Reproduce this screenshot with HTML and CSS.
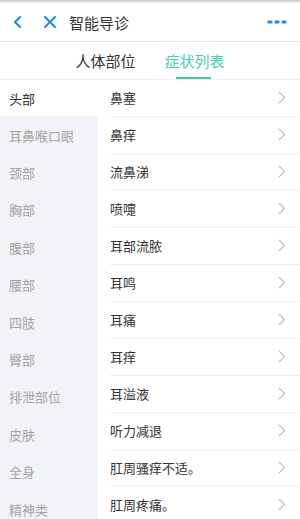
FILE: index.html
```html
<!DOCTYPE html>
<html lang="zh">
<head>
<meta charset="utf-8">
<link rel="stylesheet" href="styles.css">
</head>
<body>
<div class="app">
  <div class="strip"></div>
  <header class="header">
    <span class="icon back">
      <svg width="10" height="12" viewBox="0 0 10 12"><polyline points="7,1 2,6 7,11" fill="none" stroke="#1e88e5" stroke-width="2" stroke-linecap="round" stroke-linejoin="round"/></svg>
    </span>
    <span class="icon close">
      <svg width="14" height="14" viewBox="0 0 14 14"><path d="M2 2 L12 12 M12 2 L2 12" fill="none" stroke="#1e88e5" stroke-width="2" stroke-linecap="round"/></svg>
    </span>
    <span class="title">智能导诊</span>
    <span class="more">
      <svg width="20" height="4" viewBox="0 0 20 4"><rect x="0.5" y="0.5" width="5" height="3" rx="1" fill="#1e88e5"/><rect x="7.5" y="0.5" width="5" height="3" rx="1" fill="#1e88e5"/><rect x="14.5" y="0.5" width="5" height="3" rx="1" fill="#1e88e5"/></svg>
    </span>
  </header>
  <nav class="tabs">
    <span class="tab">人体部位</span>
    <span class="tab active">症状列表</span>
  </nav>
  <div class="main">
    <ul class="side">
      <li class="side-item selected">头部</li>
      <li class="side-item">耳鼻喉口眼</li>
      <li class="side-item">颈部</li>
      <li class="side-item">胸部</li>
      <li class="side-item">腹部</li>
      <li class="side-item">腰部</li>
      <li class="side-item">四肢</li>
      <li class="side-item">臀部</li>
      <li class="side-item">排泄部位</li>
      <li class="side-item">皮肤</li>
      <li class="side-item">全身</li>
      <li class="side-item">精神类</li>
    </ul>
    <ul class="list">
      <li class="row"><span>鼻塞</span><svg class="chev" width="8" height="13" viewBox="0 0 8 13"><polyline points="1,1 6.5,6.5 1,12" fill="none" stroke="#bdbdbd" stroke-width="1.2"/></svg></li>
      <li class="row"><span>鼻痒</span><svg class="chev" width="8" height="13" viewBox="0 0 8 13"><polyline points="1,1 6.5,6.5 1,12" fill="none" stroke="#bdbdbd" stroke-width="1.2"/></svg></li>
      <li class="row"><span>流鼻涕</span><svg class="chev" width="8" height="13" viewBox="0 0 8 13"><polyline points="1,1 6.5,6.5 1,12" fill="none" stroke="#bdbdbd" stroke-width="1.2"/></svg></li>
      <li class="row"><span>喷嚏</span><svg class="chev" width="8" height="13" viewBox="0 0 8 13"><polyline points="1,1 6.5,6.5 1,12" fill="none" stroke="#bdbdbd" stroke-width="1.2"/></svg></li>
      <li class="row"><span>耳部流脓</span><svg class="chev" width="8" height="13" viewBox="0 0 8 13"><polyline points="1,1 6.5,6.5 1,12" fill="none" stroke="#bdbdbd" stroke-width="1.2"/></svg></li>
      <li class="row"><span>耳鸣</span><svg class="chev" width="8" height="13" viewBox="0 0 8 13"><polyline points="1,1 6.5,6.5 1,12" fill="none" stroke="#bdbdbd" stroke-width="1.2"/></svg></li>
      <li class="row"><span>耳痛</span><svg class="chev" width="8" height="13" viewBox="0 0 8 13"><polyline points="1,1 6.5,6.5 1,12" fill="none" stroke="#bdbdbd" stroke-width="1.2"/></svg></li>
      <li class="row"><span>耳痒</span><svg class="chev" width="8" height="13" viewBox="0 0 8 13"><polyline points="1,1 6.5,6.5 1,12" fill="none" stroke="#bdbdbd" stroke-width="1.2"/></svg></li>
      <li class="row"><span>耳溢液</span><svg class="chev" width="8" height="13" viewBox="0 0 8 13"><polyline points="1,1 6.5,6.5 1,12" fill="none" stroke="#bdbdbd" stroke-width="1.2"/></svg></li>
      <li class="row"><span>听力减退</span><svg class="chev" width="8" height="13" viewBox="0 0 8 13"><polyline points="1,1 6.5,6.5 1,12" fill="none" stroke="#bdbdbd" stroke-width="1.2"/></svg></li>
      <li class="row"><span>肛周骚痒不适。</span><svg class="chev" width="8" height="13" viewBox="0 0 8 13"><polyline points="1,1 6.5,6.5 1,12" fill="none" stroke="#bdbdbd" stroke-width="1.2"/></svg></li>
      <li class="row"><span>肛周疼痛。</span><svg class="chev" width="8" height="13" viewBox="0 0 8 13"><polyline points="1,1 6.5,6.5 1,12" fill="none" stroke="#bdbdbd" stroke-width="1.2"/></svg></li>
    </ul>
  </div>
</div>
</body>
</html>
```

FILE: styles.css
```css
* { box-sizing: border-box; }
html, body {
  margin: 0;
  padding: 0;
  background: #fff;
}
body {
  width: 300px;
  height: 519px;
  overflow: hidden;
  font-family: "Noto Sans CJK SC", "Noto Sans", sans-serif;
  color: #333;
}
ul { list-style: none; margin: 0; padding: 0; }

.strip {
  height: 3px;
  background: linear-gradient(#c4c4c4, #f2f2f2);
}
.header {
  height: 39px;
  display: flex;
  align-items: center;
  border-bottom: 1px solid #e6e6e6;
}
.icon { display: flex; align-items: center; }
.back { margin-left: 13px; }
.close { margin-left: 20px; }
.title {
  margin-left: 12px;
  font-size: 15px;
  color: #333;
  flex: 1;
  line-height: 1;
}
.more { margin-right: 13px; display: flex; }

.tabs {
  height: 38px;
  display: flex;
  justify-content: center;
  gap: 29px;
  border-bottom: 1px solid #eeeeee;
}
.tab {
  font-size: 15px;
  line-height: 37px;
  color: #333;
  position: relative;
}
.tab.active { color: #45cfb2; }
.tab.active::after {
  content: "";
  position: absolute;
  left: 11px;
  right: 14px;
  bottom: 0;
  height: 2px;
  background: #3ccaa9;
}

.main {
  display: flex;
}
.side {
  width: 98px;
  background: #f2f3f7;
}
.side-item {
  height: 37.4px;
  display: flex;
  align-items: center;
  padding-left: 9px;
  padding-top: 1px;
  font-size: 13px;
  color: #a3a3a3;
}
.side-item.selected {
  background: #fff;
  color: #333;
  height: 36px;
}
.list {
  flex: 1;
  margin-left: 12px;
}
.row {
  height: 37px;
  display: flex;
  align-items: center;
  justify-content: space-between;
  padding-right: 14px;
  padding-bottom: 1px;
  border-bottom: 1px solid #eeeeee;
  font-size: 13px;
  color: #333;
}
.chev { display: block; }
```
